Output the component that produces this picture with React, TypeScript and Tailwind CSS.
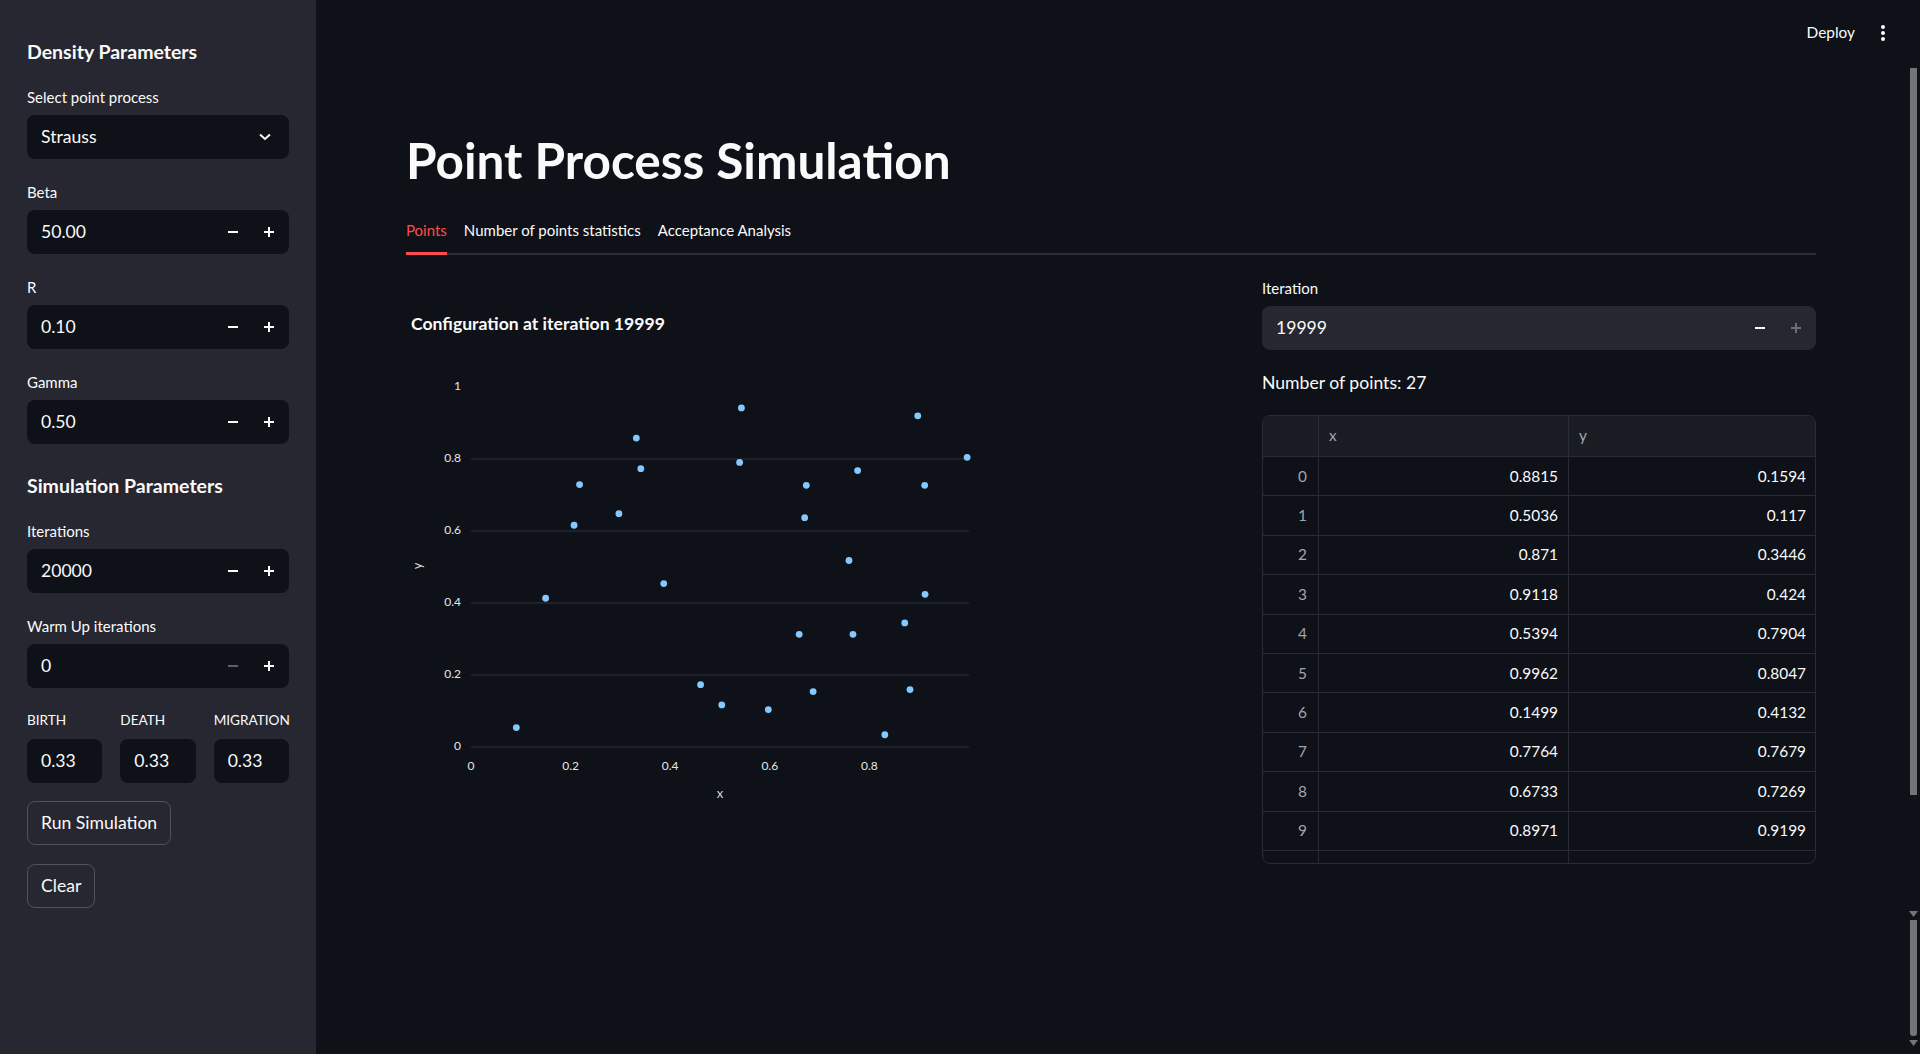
import React from 'react';

const points: [number, number][] = [
  [0.091, 0.054], [0.1499, 0.4132], [0.207, 0.616], [0.218, 0.729], [0.297, 0.648],
  [0.332, 0.858], [0.341, 0.773], [0.387, 0.454], [0.461, 0.173], [0.5036, 0.117],
  [0.5394, 0.7904], [0.543, 0.942], [0.597, 0.104], [0.659, 0.313], [0.67, 0.637],
  [0.6733, 0.7269], [0.687, 0.154], [0.759, 0.518], [0.767, 0.313], [0.7764, 0.7679],
  [0.831, 0.034], [0.871, 0.3446], [0.8815, 0.1594], [0.8971, 0.9199], [0.9118, 0.424],
  [0.911, 0.727], [0.9962, 0.8047],
];

const rows = [
  ['0.8815', '0.1594'], ['0.5036', '0.117'], ['0.871', '0.3446'], ['0.9118', '0.424'],
  ['0.5394', '0.7904'], ['0.9962', '0.8047'], ['0.1499', '0.4132'], ['0.7764', '0.7679'],
  ['0.6733', '0.7269'], ['0.8971', '0.9199'],
];

function Minus({ dim }: { dim?: boolean }) {
  return (
    <svg width="10" height="10" viewBox="0 0 10 10">
      <line x1="0" y1="5" x2="10" y2="5" stroke={dim ? '#5c5e68' : '#fafafa'} strokeWidth="2" />
    </svg>
  );
}

function Plus({ dim }: { dim?: boolean }) {
  const c = dim ? '#6b6d78' : '#fafafa';
  return (
    <svg width="10" height="10" viewBox="0 0 10 10">
      <line x1="0" y1="5" x2="10" y2="5" stroke={c} strokeWidth="2" />
      <line x1="5" y1="0" x2="5" y2="10" stroke={c} strokeWidth="2" />
    </svg>
  );
}

function NumberInput({
  value,
  minusDim,
  plusDim,
  light,
}: {
  value: string;
  minusDim?: boolean;
  plusDim?: boolean;
  light?: boolean;
}) {
  return (
    <div
      className={`h-[44px] rounded-[8px] flex items-center pl-[14px] ${light ? 'bg-[#262730]' : 'bg-[#0e1117]'}`}
    >
      <span className="flex-1 text-[17.6px]">{value}</span>
      <div className="w-[36px] h-full flex items-center justify-center">
        <Minus dim={minusDim} />
      </div>
      <div className="w-[36px] mr-[2px] h-full flex items-center justify-center">
        <Plus dim={plusDim} />
      </div>
    </div>
  );
}

function Label({ children, small }: { children: React.ReactNode; small?: boolean }) {
  return (
    <div className={`h-[22px] flex items-center leading-none whitespace-nowrap ${small ? 'text-[13.6px]' : 'text-[15px]'}`}>
      {children}
    </div>
  );
}

function Field({
  label,
  children,
  className,
  small,
}: {
  label: string;
  children: React.ReactNode;
  className?: string;
  small?: boolean;
}) {
  return (
    <div className={className}>
      <Label small={small}>{label}</Label>
      <div className="mt-[7px]">{children}</div>
    </div>
  );
}

function Chart() {
  const x0 = 65;
  const w = 498;
  const yTop = 49;
  const h = 360;
  const px = (v: number) => x0 + v * w;
  const py = (v: number) => yTop + h - v * h;
  return (
    <svg width="600" height="480" className="block mt-[1px]">
      {[0, 0.2, 0.4, 0.6, 0.8].map((v) => (
        <line key={v} x1={x0} x2={x0 + w} y1={py(v)} y2={py(v)} stroke="#31333f" strokeWidth="1" />
      ))}
      {[0, 0.2, 0.4, 0.6, 0.8, 1].map((v) => (
        <text key={v} x={55} y={py(v)} textAnchor="end" dominantBaseline="middle" fontSize="12" fill="#e6e6e9">
          {v === 0 || v === 1 ? String(v) : v.toFixed(1)}
        </text>
      ))}
      {[0, 0.2, 0.4, 0.6, 0.8].map((v) => (
        <text key={v} x={px(v)} y={429} textAnchor="middle" dominantBaseline="middle" fontSize="12" fill="#e6e6e9">
          {v === 0 ? '0' : v.toFixed(1)}
        </text>
      ))}
      <text x={314} y={457} textAnchor="middle" dominantBaseline="middle" fontSize="13" fill="#d5d6da">
        x
      </text>
      <text
        x={13}
        y={228}
        textAnchor="middle"
        dominantBaseline="middle"
        fontSize="13"
        fill="#d5d6da"
        transform="rotate(-90 13 228)"
      >
        y
      </text>
      {points.map(([a, b], i) => (
        <circle key={i} cx={px(a)} cy={py(b)} r="3.4" fill="#83c9ff" />
      ))}
    </svg>
  );
}

function Sidebar() {
  return (
    <aside className="w-[316px] shrink-0 h-full bg-[#262730] px-[27px] pt-[39px] flex flex-col">
      <h3 className="text-[19.5px] leading-[26px] font-bold">Density Parameters</h3>
      <Field label="Select point process" className="mt-[21px]">
        <div className="h-[44px] rounded-[8px] bg-[#0e1117] flex items-center pl-[14px] pr-[18px]">
          <span className="flex-1 text-[17.6px]">Strauss</span>
          <svg width="12" height="8" viewBox="0 0 12 8">
            <path d="M1 1.5 L6 6 L11 1.5" fill="none" stroke="#fafafa" strokeWidth="2" />
          </svg>
        </div>
      </Field>
      <Field label="Beta" className="mt-[22px]">
        <NumberInput value="50.00" />
      </Field>
      <Field label="R" className="mt-[22px]">
        <NumberInput value="0.10" />
      </Field>
      <Field label="Gamma" className="mt-[22px]">
        <NumberInput value="0.50" />
      </Field>
      <h3 className="mt-[29px] text-[19.5px] leading-[26px] font-bold">Simulation Parameters</h3>
      <Field label="Iterations" className="mt-[21px]">
        <NumberInput value="20000" />
      </Field>
      <Field label="Warm Up iterations" className="mt-[22px]">
        <NumberInput value="0" minusDim />
      </Field>
      <div className="mt-[22px] grid grid-cols-3 gap-[18px]">
        {['BIRTH', 'DEATH', 'MIGRATION'].map((l) => (
          <Field key={l} label={l} small>
            <div className="h-[44px] rounded-[8px] bg-[#0e1117] flex items-center pl-[14px] text-[17.6px]">0.33</div>
          </Field>
        ))}
      </div>
      <div className="mt-[18px] flex flex-col items-start gap-[19px]">
        <button className="h-[44px] px-[13px] rounded-[8px] border border-[#50525c] text-[17.6px]">
          Run Simulation
        </button>
        <button className="h-[44px] px-[13px] rounded-[8px] border border-[#50525c] text-[17.6px]">Clear</button>
      </div>
    </aside>
  );
}

function DataTable() {
  return (
    <div className="mt-[19px] h-[449px] border border-[#2a2c34] rounded-[8px] overflow-hidden text-[15.4px]">
      <div className="grid grid-cols-[56px_250px_1fr] h-[41px] bg-[#1a1c24] border-b border-[#2a2c34] text-[#a3a5ad]">
        <div className="border-r border-[#2a2c34]" />
        <div className="border-r border-[#2a2c34] flex items-center pl-[10px]">x</div>
        <div className="flex items-center pl-[10px]">y</div>
      </div>
      {rows.map(([a, b], i) => (
        <div key={i} className="grid grid-cols-[56px_250px_1fr] h-[39.4px] border-b border-[#2a2c34]">
          <div className="border-r border-[#2a2c34] flex items-center justify-end pr-[11px] text-[#a3a5ad]">{i}</div>
          <div className="border-r border-[#2a2c34] flex items-center justify-end pr-[10px]">{a}</div>
          <div className="flex items-center justify-end pr-[9px]">{b}</div>
        </div>
      ))}
      <div className="grid grid-cols-[56px_250px_1fr] h-[39.4px]">
        <div className="border-r border-[#2a2c34]" />
        <div className="border-r border-[#2a2c34]" />
        <div />
      </div>
    </div>
  );
}

export default function App() {
  return (
    <div className="h-screen w-full flex overflow-hidden bg-[#0e1117] text-[#fafafa] font-['Lato',sans-serif]">
      <Sidebar />
      <main className="flex-1 min-w-0 h-full flex flex-col">
        <header className="h-[66px] shrink-0 flex items-center justify-end pr-[21px] gap-[26px]">
          <span className="text-[15.4px]">Deploy</span>
          <svg width="4" height="16" viewBox="0 0 4 16">
            <circle cx="2" cy="2" r="2" fill="#fafafa" />
            <circle cx="2" cy="8" r="2" fill="#fafafa" />
            <circle cx="2" cy="14" r="2" fill="#fafafa" />
          </svg>
        </header>
        <div className="px-[90px] pt-[65px]">
          <h1 className="text-[49.5px] leading-[58px] font-bold">Point Process Simulation</h1>
          <div className="mt-[29px] flex gap-[17px] border-b-2 border-[#2c2e36] text-[15px]">
            <div className="pb-[10px] -mb-[2px] border-b-[3px] border-[#ff4b4b] text-[#ff4b4b] leading-[24px]">Points</div>
            <div className="pb-[10px] -mb-[2px] border-b-[3px] border-transparent leading-[24px]">Number of points statistics</div>
            <div className="pb-[10px] -mb-[2px] border-b-[3px] border-transparent leading-[24px]">Acceptance Analysis</div>
          </div>
          <div className="mt-[22px] grid grid-cols-[1fr_554px] gap-[18px]">
            <div>
              <div className="mt-[34px] pl-[5px] text-[17.6px] leading-[26px] font-bold">Configuration at iteration 19999</div>
              <Chart />
            </div>
            <div>
              <Label>Iteration</Label>
              <div className="mt-[7px]">
                <NumberInput value="19999" light plusDim />
              </div>
              <div className="mt-[20px] text-[17.6px] leading-[26px]">Number of points: 27</div>
              <DataTable />
            </div>
          </div>
        </div>
      </main>
      <div className="w-[14px] shrink-0 h-full flex flex-col items-center pt-[68px]">
        <div className="w-[7px] h-[727px] bg-[#737378]" />
        <svg className="mt-[116px]" width="9" height="6" viewBox="0 0 9 6">
          <path d="M0 0 H9 L4.5 6 Z" fill="#737378" />
        </svg>
        <div className="mt-[3px] w-[7px] h-[116px] bg-[#737378] rounded-b-[3px]" />
        <svg className="mt-[4px]" width="9" height="6" viewBox="0 0 9 6">
          <path d="M0 0 H9 L4.5 6 Z" fill="#737378" />
        </svg>
      </div>
    </div>
  );
}
